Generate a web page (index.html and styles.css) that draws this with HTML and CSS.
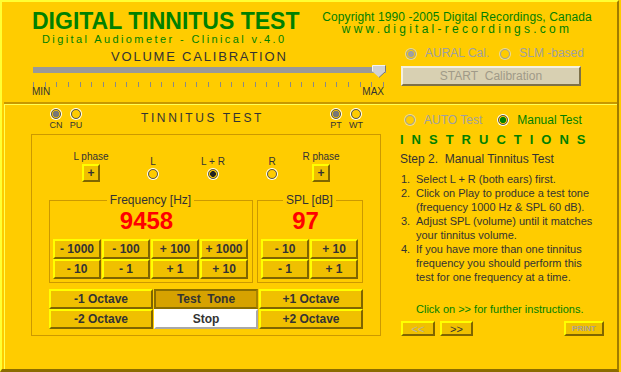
FILE: index.html
```html
<!DOCTYPE html>
<html lang="en">
<head>
    <meta charset="UTF-8">
    <title>Digital Tinnitus Test</title>
    <link rel="stylesheet" href="styles.css">
</head>
<body>
<div class="app">

    <!-- Header -->
    <div class="head">
        <div class="brand">
            <h1>DIGITAL TINNITUS TEST</h1>
            <div class="subtitle">Digital Audiometer - Clinical v.4.0</div>
        </div>
        <div class="copy">
            <div class="rights">Copyright 1990 -2005 Digital Recordings, Canada</div>
            <div class="url">www.digital-recordings.com</div>
        </div>
    </div>

    <!-- Volume Calibration -->
    <div class="calib">
        <div class="calib-left">
            <div class="vol-title">VOLUME CALIBRATION</div>
            <div class="slider">
                <svg class="thumb" width="14" height="13" viewBox="0 0 14 13">
                    <polygon points="0.5,0.5 13.5,0.5 13.5,6.5 7,12.5 0.5,6.5" fill="#d2d2d2"/>
                    <polyline points="0.5,6.5 0.5,0.5 13.5,0.5" fill="none" stroke="#f4f4f4"/>
                    <polyline points="13.5,0.5 13.5,6.5 7,12.5" fill="none" stroke="#777"/>
                </svg>
            </div>
            <div class="ticks"></div>
            <div class="minmax"><span>MIN</span><span>MAX</span></div>
        </div>
        <div class="calib-right">
            <div class="opt-row">
                <span class="opt disabled"><span class="radio on"></span><span class="opt-label">AURAL Cal.</span></span>
                <span class="opt disabled second"><span class="radio"></span><span class="opt-label">SLM -based</span></span>
            </div>
            <button class="btn-start" disabled>START&nbsp; Calibration</button>
        </div>
    </div>

    <!-- Tinnitus Test -->
    <div class="panel">
        <div class="tone-col">
            <div class="tone-head">
                <div class="mini"><span class="radio on gray"></span><span>CN</span></div>
                <div class="mini"><span class="radio"></span><span>PU</span></div>
                <div class="tt-title">TINNITUS TEST</div>
                <div class="mini"><span class="radio on gray"></span><span>PT</span></div>
                <div class="mini"><span class="radio"></span><span>WT</span></div>
            </div>

            <div class="tone-box">
                <div class="ears">
                    <div class="ear"><span>L phase</span><button class="btn-plus">+</button></div>
                    <div class="ear"><span>L</span><span class="radio"></span></div>
                    <div class="ear"><span>L + R</span><span class="radio on"></span></div>
                    <div class="ear"><span>R</span><span class="radio"></span></div>
                    <div class="ear"><span>R phase</span><button class="btn-plus">+</button></div>
                </div>

                <div class="readouts">
                    <fieldset class="readout freq">
                        <legend>Frequency [Hz]</legend>
                        <div class="value">9458</div>
                        <div class="keys keys-4">
                            <button class="key">- 1000</button>
                            <button class="key">- 100</button>
                            <button class="key">+ 100</button>
                            <button class="key">+ 1000</button>
                            <button class="key">- 10</button>
                            <button class="key">- 1</button>
                            <button class="key">+ 1</button>
                            <button class="key">+ 10</button>
                        </div>
                    </fieldset>
                    <fieldset class="readout spl">
                        <legend>SPL [dB]</legend>
                        <div class="value">97</div>
                        <div class="keys keys-2">
                            <button class="key">- 10</button>
                            <button class="key">+ 10</button>
                            <button class="key">- 1</button>
                            <button class="key">+ 1</button>
                        </div>
                    </fieldset>
                </div>

                <div class="octaves">
                    <button class="key">-1 Octave</button>
                    <button class="key play">Test&nbsp; Tone</button>
                    <button class="key">+1 Octave</button>
                    <button class="key">-2 Octave</button>
                    <button class="key stop">Stop</button>
                    <button class="key">+2 Octave</button>
                </div>
            </div>
        </div>

        <!-- Instructions -->
        <div class="help-col">
            <div class="opt-row mode-row">
                <span class="opt disabled"><span class="radio"></span><span class="opt-label">AUTO Test</span></span>
                <span class="opt active second"><span class="radio on green"></span><span class="opt-label">Manual Test</span></span>
            </div>
            <div class="help-title">INSTRUCTIONS</div>
            <div class="step">Step 2.&nbsp; Manual Tinnitus Test</div>
            <ol class="steps">
                <li><span class="num">1.</span><span>Select L + R (both ears) first.</span></li>
                <li><span class="num">2.</span><span>Click on Play to produce a test tone<br>(frequency 1000 Hz &amp; SPL 60 dB).</span></li>
                <li><span class="num">3.</span><span>Adjust SPL (volume) until it matches<br>your tinnitus volume.</span></li>
                <li><span class="num">4.</span><span>If you have more than one tinnitus<br>frequency you should perform this<br>test for one frequency at a time.</span></li>
            </ol>
            <div class="more">Click on &gt;&gt; for further instructions.</div>
            <div class="nav">
                <button class="nav-btn off">&lt;&lt;</button>
                <button class="nav-btn next">&gt;&gt;</button>
                <button class="nav-btn print">PRINT</button>
            </div>
        </div>
    </div>
</div>
</body>
</html>
```

FILE: styles.css
```css
:root {
    --bg: #ffcc00;
    --face: #f0c000;
    --hi: #ffff00;
    --shade: #7f6500;
    --line: #cc9900;
    --green: #008000;
    --text: #333333;
}
* { box-sizing: border-box; }
body {
    margin: 0;
    background-color: var(--bg);
    font-family: 'Liberation Sans', Arial, sans-serif;
    color: var(--text);
}
button { font-family: inherit; padding: 0; cursor: pointer; }

.app {
    width: 619px;
    height: 372px;
    display: flex;
    flex-direction: column;
    border-top: 2px solid #ffff33;
    border-left: 2px solid #ffff33;
    border-right: 2px solid #a07c00;
    border-bottom: 3px solid #8c6c00;
}

/* --- Header --- */
.head {
    display: flex;
    height: 43px;
    padding-top: 8px;
}
.brand { padding-left: 30px; }
.brand h1 {
    margin: 0;
    font-size: 23px;
    line-height: 23px;
    font-weight: bold;
    color: var(--green);
}
.subtitle {
    margin-left: 10px;
    font-size: 11px;
    line-height: 12px;
    letter-spacing: 2.4px;
    color: var(--green);
    white-space: nowrap;
}
.copy {
    width: 290px;
    margin: 1px 15px 0 auto;
    text-align: center;
    font-size: 12px;
    color: var(--green);
    white-space: nowrap;
}
.copy .rights { line-height: 13px; letter-spacing: 0.1px; }
.copy .url { line-height: 11px; letter-spacing: 3.25px; }

/* --- Volume calibration --- */
.calib { display: flex; height: 57px; }
.calib-left { width: 399px; }
.vol-title {
    margin: 5px 0 0 109px;
    font-size: 13px;
    line-height: 14px;
    letter-spacing: 1.8px;
}
.slider {
    position: relative;
    margin: 3px 0 0 31px;
    width: 353px;
    height: 6px;
    background-color: #999999;
}
.thumb { position: absolute; left: 339px; top: -2px; }
.ticks {
    margin: 9px 0 0 31px;
    width: 351px;
    height: 5px;
    background: repeating-linear-gradient(to right, #888 0 1px, transparent 1px 11.667px);
}
.minmax {
    display: flex;
    justify-content: space-between;
    margin-left: 30px;
    width: 352px;
    font-size: 10px;
    line-height: 10px;
}
.calib-right { padding-top: 2px; }
.btn-start {
    display: block;
    margin-top: 6px;
    width: 180px;
    height: 20px;
    background-color: #d8d0b2;
    border: 2px solid;
    border-color: #f6f1de #7d7048 #7d7048 #f6f1de;
    color: #a09a88;
    font-size: 12px;
    cursor: default;
}

/* --- Radios --- */
.radio {
    display: inline-block;
    flex: none;
    width: 10px;
    height: 10px;
    border: 1px solid #555;
    border-radius: 50%;
    box-shadow: 0 0 0 1px #ffffff;
}
.radio.on { background: radial-gradient(circle, #222 0 2.6px, transparent 3.2px); }
.radio.on.gray { background: radial-gradient(circle, #777 0 3px, transparent 3.6px); }
.radio.on.green { background: radial-gradient(circle, var(--green) 0 2.8px, transparent 3.4px); }

.opt-row { display: flex; align-items: center; height: 13px; }
.opt { display: flex; align-items: center; font-size: 12px; line-height: 13px; white-space: nowrap; }
.opt:first-child { margin-left: 5px; }
.opt.second { margin-left: 11px; }
.opt-label { margin-left: 9px; }
.opt.disabled { color: #a0a0a0; }
.opt.disabled .radio { border-color: #a0a0a0; box-shadow: 0 0 0 1px #eadc9a; }
.opt.disabled .radio.on { background: radial-gradient(circle, #a0a0a0 0 2.8px, transparent 3.4px); }
.opt.active { color: var(--green); }

/* --- Tinnitus test panel --- */
.panel {
    flex: 1;
    display: flex;
    margin-left: 2px;
    border-top: 2px solid #c89800;
    box-shadow: inset 1px 1px 0 #ffff55;
}
.tone-col { width: 396px; }
.tone-head {
    display: flex;
    align-items: flex-start;
    height: 30px;
    padding: 5px 0 0 42px;
}
.mini {
    width: 20px;
    display: flex;
    flex-direction: column;
    align-items: center;
    font-size: 9px;
    line-height: 9px;
}
.mini .radio { margin-bottom: 2px; }
.tt-title {
    width: 240px;
    padding: 3px 0 0 55px;
    font-size: 12px;
    line-height: 12px;
    letter-spacing: 2.6px;
}
.tone-box {
    margin-left: 27px;
    width: 350px;
    height: 202px;
    border: 1px solid var(--line);
    padding-top: 17px;
}
.ears {
    display: grid;
    grid-template-columns: 58px 66px 54px 64px 34px;
    align-items: end;
    margin-left: 30px;
}
.ear {
    display: flex;
    flex-direction: column;
    align-items: center;
    font-size: 10px;
    line-height: 10px;
    white-space: nowrap;
}
.ear .radio { margin: 2px 0 3px; }
.btn-plus {
    margin-top: 2px;
    width: 18px;
    height: 18px;
    background-color: var(--face);
    border: 2px solid;
    border-color: var(--hi) var(--shade) var(--shade) var(--hi);
    font-size: 12px;
    font-weight: bold;
    line-height: 12px;
    color: var(--text);
}

.readouts { display: flex; gap: 4px; margin: 12px 0 0 17px; }
.readout {
    margin: 0;
    min-width: 0;
    padding: 3px 4px 3px 3px;
    border: 1px solid var(--line);
}
.readout legend {
    margin: 0 auto;
    padding: 0 3px;
    font-size: 12px;
    line-height: 12px;
}
.freq { width: 204px; }
.spl { width: 106px; }
.value {
    padding-right: 8px;
    text-align: center;
    font-size: 24px;
    line-height: 24px;
    font-weight: bold;
    color: #ff0000;
}
.keys {
    display: grid;
    column-gap: 1px;
    grid-auto-rows: 20px;
    margin-top: 6px;
}
.keys-4 { grid-template-columns: repeat(4, 1fr); }
.keys-2 { grid-template-columns: repeat(2, 1fr); }
.key {
    background-color: var(--face);
    border: 2px solid;
    border-color: var(--hi) var(--shade) var(--shade) var(--hi);
    font-size: 12px;
    font-weight: bold;
    color: var(--text);
    white-space: nowrap;
}
.octaves {
    display: grid;
    grid-template-columns: repeat(3, 104px);
    column-gap: 1px;
    grid-auto-rows: 20px;
    margin: 6px 0 0 17px;
}
.key.play {
    background-color: #d6a200;
    border-color: #8a6d00 #a88400 #8a6d00 #8a6d00;
}
.key.stop {
    background-color: #ffffff;
    border-color: #ffffff #a8a8a8 #a8a8a8 #ffffff;
}

/* --- Instructions --- */
.help-col { width: 217px; padding-top: 10px; }
.mode-row { height: 12px; }
.mode-row .opt.second { margin-left: 16px; }
.help-title {
    margin-top: 7px;
    font-size: 13px;
    line-height: 14px;
    font-weight: bold;
    letter-spacing: 8px;
    color: var(--green);
}
.step { margin-top: 5px; font-size: 12px; line-height: 14px; }
.steps {
    margin: 6px 0 0 1px;
    padding: 0;
    list-style: none;
    font-size: 11px;
    line-height: 14px;
    white-space: nowrap;
}
.steps li { display: flex; }
.steps .num { width: 15px; flex: none; }
.more {
    margin-top: 18px;
    padding-left: 16px;
    font-size: 11px;
    line-height: 14px;
    color: var(--green);
    white-space: nowrap;
}
.nav { display: flex; margin: 5px 0 0 1px; }
.nav-btn {
    width: 34px;
    height: 15px;
    background-color: var(--face);
    border: 2px solid;
    border-color: var(--hi) var(--shade) var(--shade) var(--hi);
    font-size: 11px;
    line-height: 10px;
    color: var(--text);
}
.nav-btn.off { color: #b8b0a0; }
.nav-btn.next { width: 33px; margin-left: 5px; }
.nav-btn.print {
    width: 40px;
    margin: 0 13px 0 auto;
    font-size: 8px;
    font-weight: bold;
    color: #a8a090;
}
```
